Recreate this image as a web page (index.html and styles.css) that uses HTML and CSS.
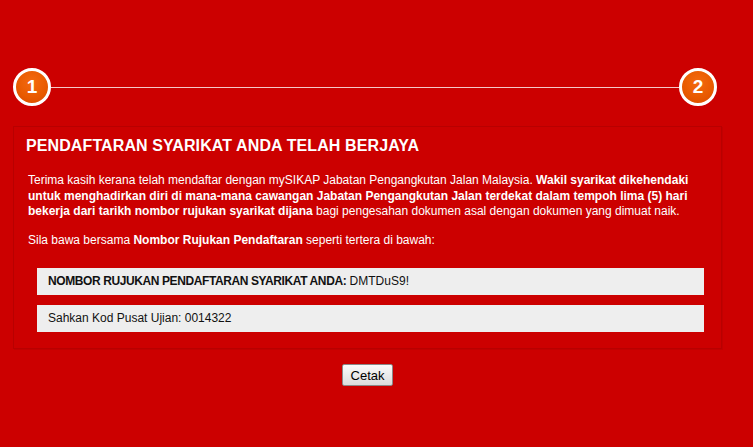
FILE: index.html
```html
<!DOCTYPE html>
<html>
<head>
<meta charset="utf-8">
<link rel="stylesheet" href="styles.css">
</head>
<body>
<div class="page">
  <div class="steps">
    <div class="step">1</div>
    <div class="step-line"></div>
    <div class="step">2</div>
  </div>
  <div class="panel">
    <h1 class="title">PENDAFTARAN SYARIKAT ANDA TELAH BERJAYA</h1>
    <p class="text">Terima kasih kerana telah mendaftar dengan mySIKAP Jabatan Pengangkutan Jalan Malaysia. <b>Wakil syarikat dikehendaki untuk menghadirkan diri di mana-mana cawangan Jabatan Pengangkutan Jalan terdekat dalam tempoh lima (5) hari bekerja dari tarikh nombor rujukan syarikat dijana</b> bagi pengesahan dokumen asal dengan dokumen yang dimuat naik.</p>
    <p class="text">Sila bawa bersama <b>Nombor Rujukan Pendaftaran</b> seperti tertera di bawah:</p>
    <div class="info-box"><b class="label">NOMBOR RUJUKAN PENDAFTARAN SYARIKAT ANDA:</b> DMTDuS9!</div>
    <div class="info-box">Sahkan Kod Pusat Ujian: 0014322</div>
  </div>
  <div class="actions">
    <button class="btn" type="button">Cetak</button>
  </div>
</div>
</body>
</html>
```

FILE: styles.css
```css
html, body {
  margin: 0;
  padding: 0;
  background: #cc0000;
}
body {
  font-family: "Liberation Sans", Arial, sans-serif;
  color: #ffffff;
}
.page {
  padding: 68px 0 0 13px;
  width: 709px;
}
.steps {
  display: flex;
  align-items: center;
  width: 704px;
}
.step {
  width: 32px;
  height: 32px;
  border: 3px solid #ffffff;
  border-radius: 50%;
  background: radial-gradient(circle at 50% 35%, #f46a10 0%, #e85a00 60%, #d84800 100%);
  color: #ffffff;
  font-weight: bold;
  font-size: 19px;
  display: flex;
  align-items: center;
  justify-content: center;
  flex: none;
}
.step-line {
  flex: 1;
  height: 1px;
  background: #f4c8c8;
}
.panel {
  margin-top: 20px;
  border: 1px solid #b80000;
  box-shadow: 1px 1px 0 #c20000;
  padding: 9px 13px 16px 12px;
}
.title {
  margin: 0 0 17px 0;
  font-size: 16px;
  font-weight: bold;
  line-height: 20px;
  letter-spacing: 0.1px;
}
.text {
  margin: 0 0 13px 2px;
  font-size: 12px;
  line-height: 15.5px;
}
.info-box {
  margin: 10px 4px 0 11px;
  background: #eeeeee;
  color: #111111;
  font-size: 12px;
  height: 27px;
  line-height: 27px;
  padding-left: 11px;
}
.info-box:first-of-type {
  margin-top: 20px;
}
.label {
  letter-spacing: -0.4px;
}
.actions {
  display: flex;
  justify-content: center;
  padding-top: 15px;
}
.btn {
  font-family: "Liberation Sans", Arial, sans-serif;
  font-size: 13px;
  padding: 2px 8px;
  height: 22px;
  background: linear-gradient(#fafafa, #dcdcdc);
  border: 1px solid #8a8a8a;
  border-radius: 2px;
  color: #000000;
}
```
